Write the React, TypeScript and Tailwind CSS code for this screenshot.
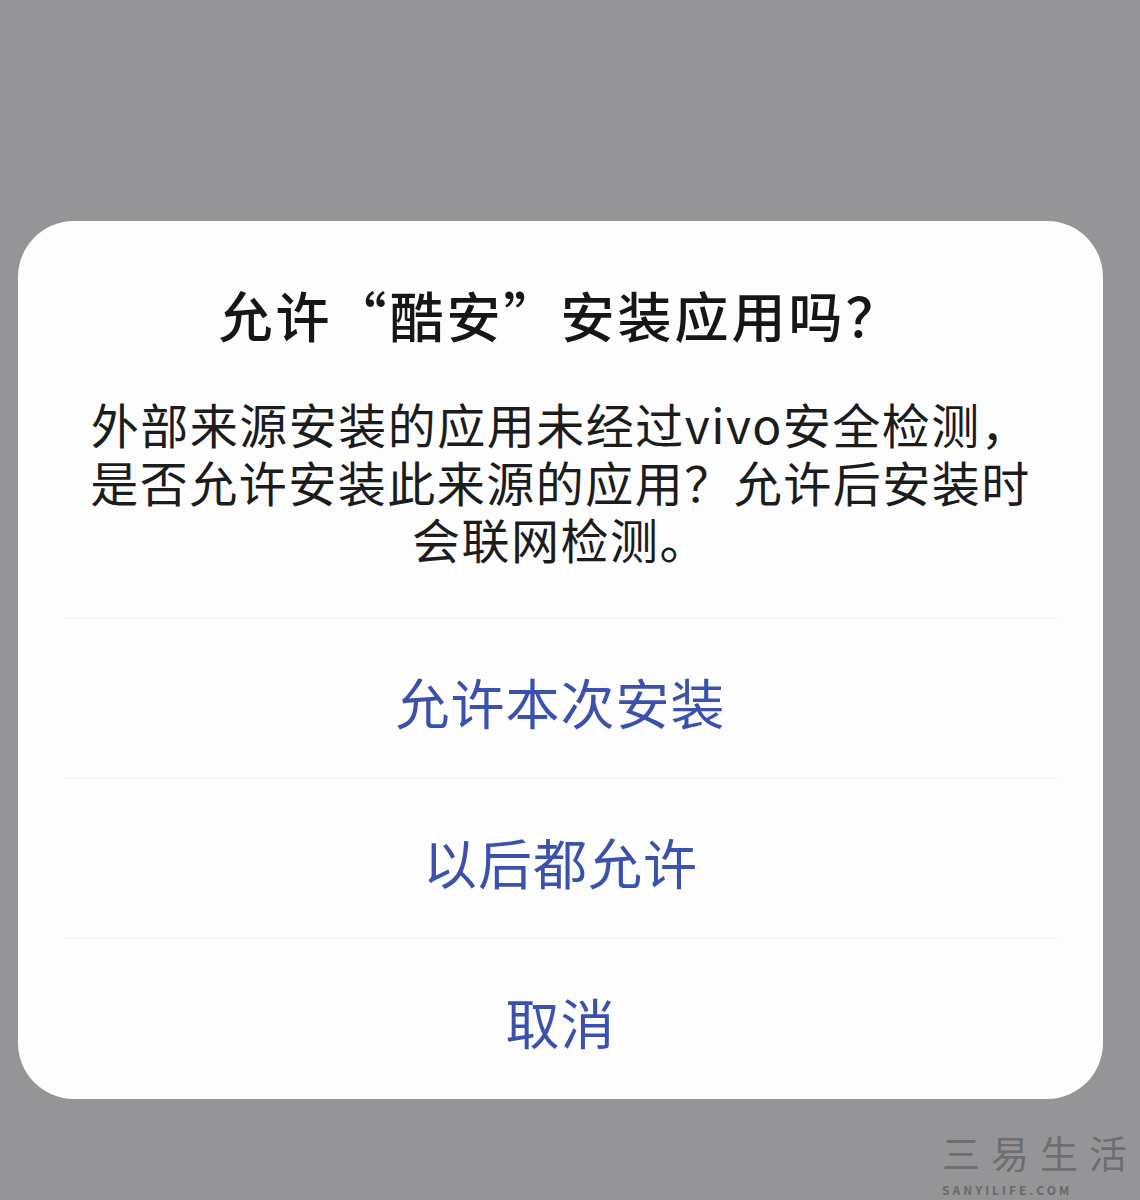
import React from "react";

const cjk = { fontFamily: '"Noto Sans CJK SC", "Noto Sans", sans-serif' };

function ActionRow({ label }: { label: string }) {
  return (
    <div className="flex flex-col">
      <div className="mx-[45px] h-[2px] bg-[#f5f6f9]" />
      <button
        className="flex h-[158px] items-center justify-center pt-[8px] text-[54px] leading-none tracking-[1px] text-[#3a52ad]"
        style={cjk}
      >
        {label}
      </button>
    </div>
  );
}

export default function App() {
  return (
    <div className="relative h-[1200px] w-[1140px] overflow-hidden bg-[#959597]" style={cjk}>
      <div className="pt-[221px] pl-[18px]">
        <div className="flex h-[878px] w-[1085px] flex-col rounded-[56px] bg-[#fdfdfe]">
          <h1 className="pt-[62px] text-center text-[54px] leading-[64px] font-medium tracking-[3px] text-[#161616]">
            允许“酷安”安装应用吗？
          </h1>
          <div className="mt-[48px] flex flex-col items-center text-[48px] leading-[57.5px] tracking-[1.5px] text-[#1c1c1c]">
            <span>外部来源安装的应用未经过vivo安全检测，</span>
            <span>是否允许安装此来源的应用？允许后安装时</span>
            <span>会联网检测。</span>
          </div>
          <div className="mt-[49px] flex flex-col">
            <ActionRow label="允许本次安装" />
            <ActionRow label="以后都允许" />
            <ActionRow label="取消" />
          </div>
        </div>
      </div>

      {/* site watermark, bottom right corner */}
      <div className="absolute right-0 bottom-0 flex w-[198px] flex-col items-start whitespace-nowrap">
        <span className="text-[38px] leading-[56px] tracking-[11px] text-[#6e6e70]">三易生活</span>
        <span className="text-[12px] leading-[20px] font-bold tracking-[3px] text-[#68686a]">SANYILIFE.COM</span>
      </div>
    </div>
  );
}
